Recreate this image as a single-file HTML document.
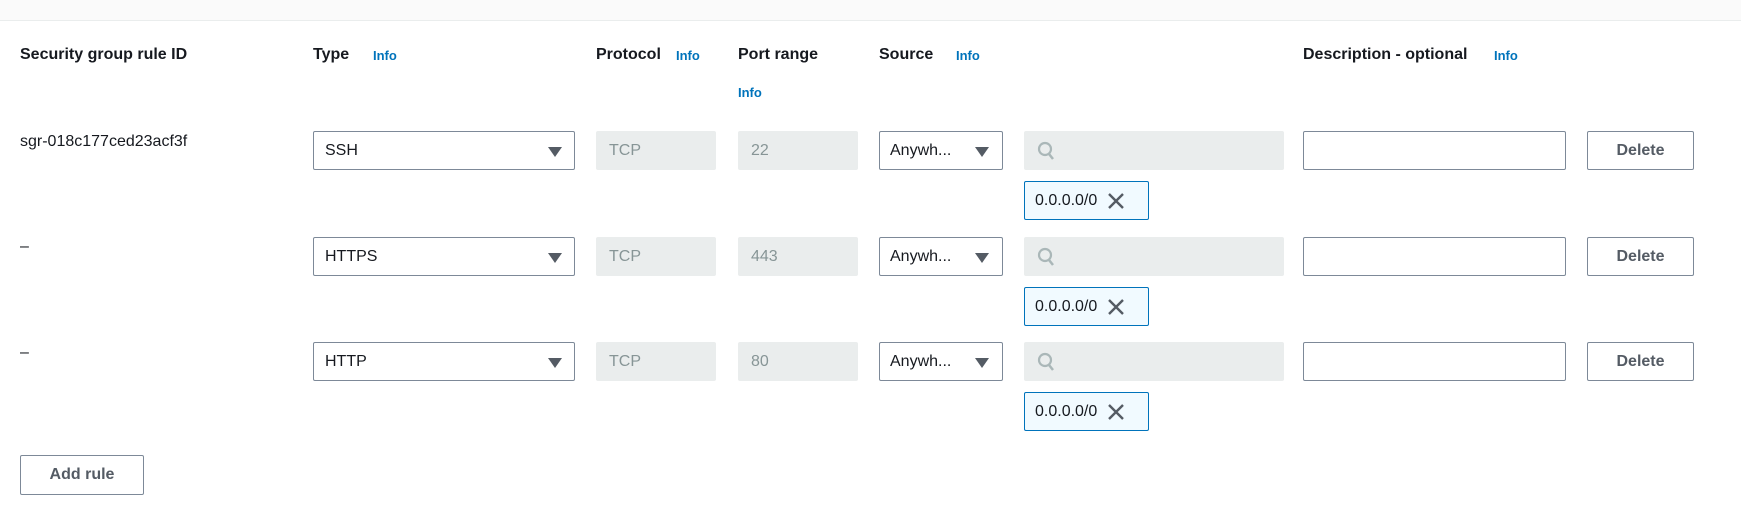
<!DOCTYPE html>
<html><head><meta charset="utf-8"><style>
*{box-sizing:border-box;margin:0;padding:0}
body{width:1741px;height:523px;background:#fff;font-family:"Liberation Sans",sans-serif;color:#16191f;position:relative;overflow:hidden}
.top{position:absolute;left:0;top:0;width:1741px;height:21px;background:#fafafa;border-bottom:1px solid #eaeded}
.a{position:absolute}
.h{font-weight:bold;font-size:16px;line-height:20px}
.i{color:#0073bb;font-weight:bold;font-size:13px;line-height:20px}
.sel{border:1px solid #7d8998;border-radius:2px;background:#fff;font-size:16px;padding-left:11px;display:flex;align-items:center}
.sel .ar{position:absolute;right:12px;top:15px;width:0;height:0;border-left:7px solid transparent;border-right:7px solid transparent;border-top:10px solid #545b64}
.dis{background:#eaeded;border-radius:2px;color:#879596;font-size:16px;padding-left:13px;display:flex;align-items:center}
.inp{border:1px solid #7d8998;border-radius:2px;background:#fff}
.btn{border:1px solid #7d8998;border-radius:2px;background:#fff;font-weight:bold;color:#545b64;font-size:16px;display:flex;align-items:center;justify-content:center}
.tok{border:1px solid #0073bb;border-radius:2px;background:#f1faff;font-size:16px;padding-left:10px;display:flex;align-items:center}
.txt{font-size:16px}
</style></head><body>
<div class="top"></div>
<div class="a h" style="left:20px;top:45px">Security group rule ID</div>
<div class="a h" style="left:313px;top:45px">Type</div><div class="a i" style="left:373px;top:46px">Info</div>
<div class="a h" style="left:596px;top:45px">Protocol</div><div class="a i" style="left:676px;top:46px">Info</div>
<div class="a h" style="left:738px;top:45px">Port range</div><div class="a i" style="left:738px;top:83px">Info</div>
<div class="a h" style="left:879px;top:45px">Source</div><div class="a i" style="left:956px;top:46px">Info</div>
<div class="a h" style="left:1303px;top:45px">Description - optional</div><div class="a i" style="left:1494px;top:46px">Info</div>

<div class="a txt" style="left:20px;top:133px">sgr-018c177ced23acf3f</div>
<div class="a txt" style="left:20px;top:238px">–</div>
<div class="a txt" style="left:20px;top:344px">–</div>

<div id="rows"></div>
<script>
var rows=[["SSH","22",131],["HTTPS","443",237],["HTTP","80",342]];
var h="";
rows.forEach(function(r){var y=r[2];
h+='<div class="a sel" style="left:313px;top:'+y+'px;width:262px;height:39px">'+r[0]+'<span class="ar"></span></div>';
h+='<div class="a dis" style="left:596px;top:'+y+'px;width:120px;height:39px">TCP</div>';
h+='<div class="a dis" style="left:738px;top:'+y+'px;width:120px;height:39px">'+r[1]+'</div>';
h+='<div class="a sel" style="left:879px;top:'+y+'px;width:124px;height:39px;padding-left:10px">Anywh...<span class="ar" style="right:13px"></span></div>';
h+='<div class="a dis" style="left:1024px;top:'+y+'px;width:260px;height:39px"><svg width="20" height="22" viewBox="0 0 20 22"><circle cx="8" cy="9" r="6" fill="none" stroke="#aab7b8" stroke-width="2.2"/><line x1="12" y1="14" x2="16" y2="19" stroke="#aab7b8" stroke-width="2.5"/></svg></div>';
h+='<div class="a inp" style="left:1303px;top:'+y+'px;width:263px;height:39px"></div>';
h+='<div class="a btn" style="left:1587px;top:'+y+'px;width:107px;height:39px">Delete</div>';
h+='<div class="a tok" style="left:1024px;top:'+(y+50)+'px;width:125px;height:39px">0.0.0.0/0<svg style="margin-left:10px" width="18" height="18" viewBox="0 0 18 18"><path d="M2 2L16 16M16 2L2 16" stroke="#545b64" stroke-width="2.4"/></svg></div>';
});
document.getElementById("rows").outerHTML=h;
</script>
<div class="a btn" style="left:20px;top:455px;width:124px;height:40px">Add rule</div>
</body></html>
